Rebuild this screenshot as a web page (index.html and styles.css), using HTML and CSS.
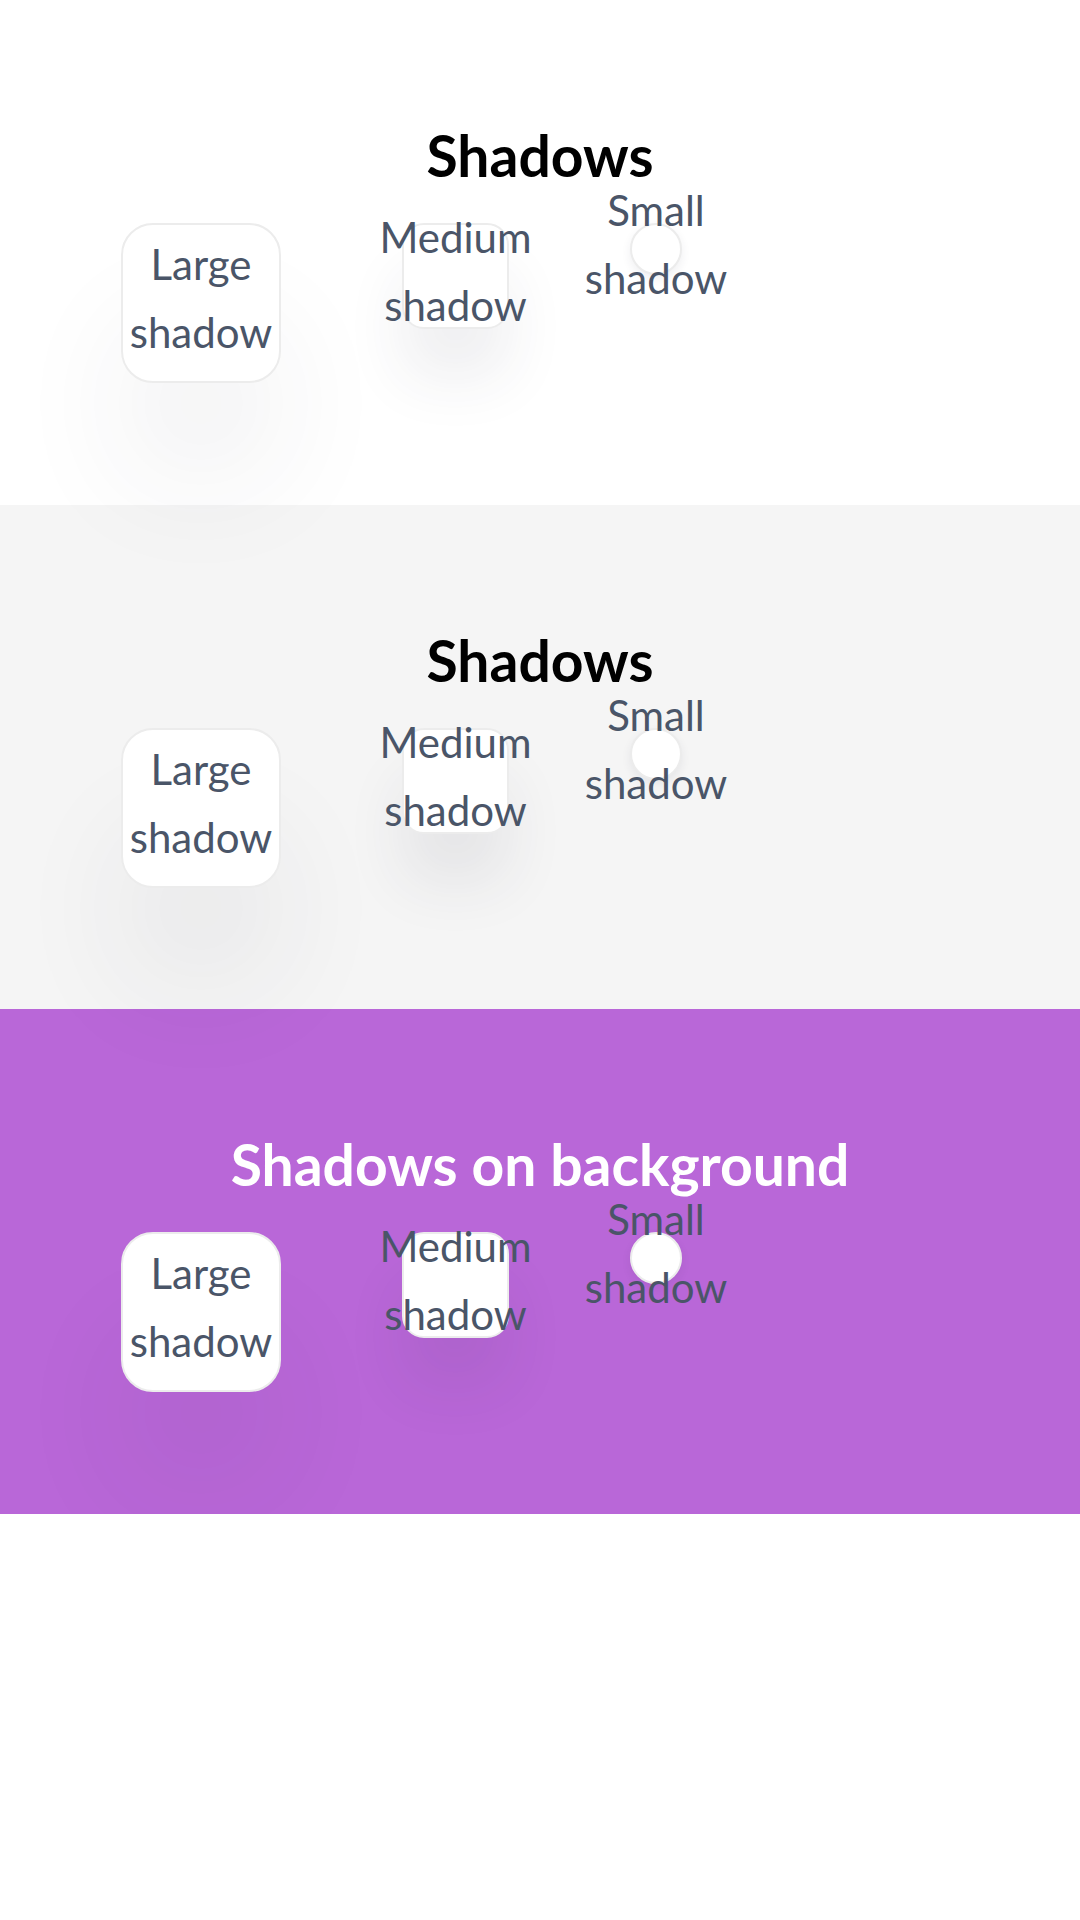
FILE: index.html
```html
<!DOCTYPE html>
<html>
<head>
<meta charset="utf-8">
<link rel="stylesheet" href="styles.css">
</head>
<body>
<section class="section section-white">
  <h2 class="title">Shadows</h2>
  <div class="row">
    <div class="shape shape-large"><span class="label">Large shadow</span></div>
    <div class="shape shape-medium"><span class="label">Medium shadow</span></div>
    <div class="shape shape-small"><span class="label">Small shadow</span></div>
  </div>
</section>
<section class="section section-grey">
  <h2 class="title">Shadows</h2>
  <div class="row">
    <div class="shape shape-large"><span class="label">Large shadow</span></div>
    <div class="shape shape-medium"><span class="label">Medium shadow</span></div>
    <div class="shape shape-small"><span class="label">Small shadow</span></div>
  </div>
</section>
<section class="section section-purple">
  <h2 class="title title-light">Shadows on background</h2>
  <div class="row">
    <div class="shape shape-large"><span class="label">Large shadow</span></div>
    <div class="shape shape-medium"><span class="label">Medium shadow</span></div>
    <div class="shape shape-small"><span class="label">Small shadow</span></div>
  </div>
</section>
</body>
</html>
```
FILE: styles.css
```css
html, body {
  margin: 0;
  padding: 0;
  background: #ffffff;
  font-family: "Lato", "Noto Sans", sans-serif;
}

.section {
  height: 504.5px;
  box-sizing: border-box;
  padding-top: 122px;
}

.section-white { background: #ffffff; }
.section-grey { background: #f5f5f5; }
.section-purple { background: #b967d8; }

.title {
  margin: 0;
  text-align: center;
  font-size: 57px;
  line-height: 66px;
  font-weight: 700;
  color: #000000;
}

.title-light { color: #ffffff; }

.row {
  display: flex;
  align-items: flex-start;
  gap: 121px;
  padding-left: 121px;
  margin-top: 35px;
}

.shape {
  flex: none;
  box-sizing: border-box;
  background: #ffffff;
  border: 2px solid #ececec;
  display: flex;
  align-items: center;
  justify-content: center;
}

.shape-large {
  width: 160px;
  height: 160px;
  border-radius: 32px;
  box-shadow: 0 100px 120px rgba(45, 55, 72, 0.06);
}

.shape-medium {
  width: 107px;
  height: 106px;
  border-radius: 22px;
  box-shadow: 0 50px 60px rgba(45, 55, 72, 0.08);
}

.shape-small {
  width: 52px;
  height: 52px;
  border-radius: 50%;
  box-shadow: 0 4px 10px rgba(45, 55, 72, 0.08);
}

.label {
  flex: none;
  width: min-content;
  text-align: center;
  font-size: 42px;
  line-height: 68px;
  color: #4a5568;
  padding-bottom: 10px;
}
```
